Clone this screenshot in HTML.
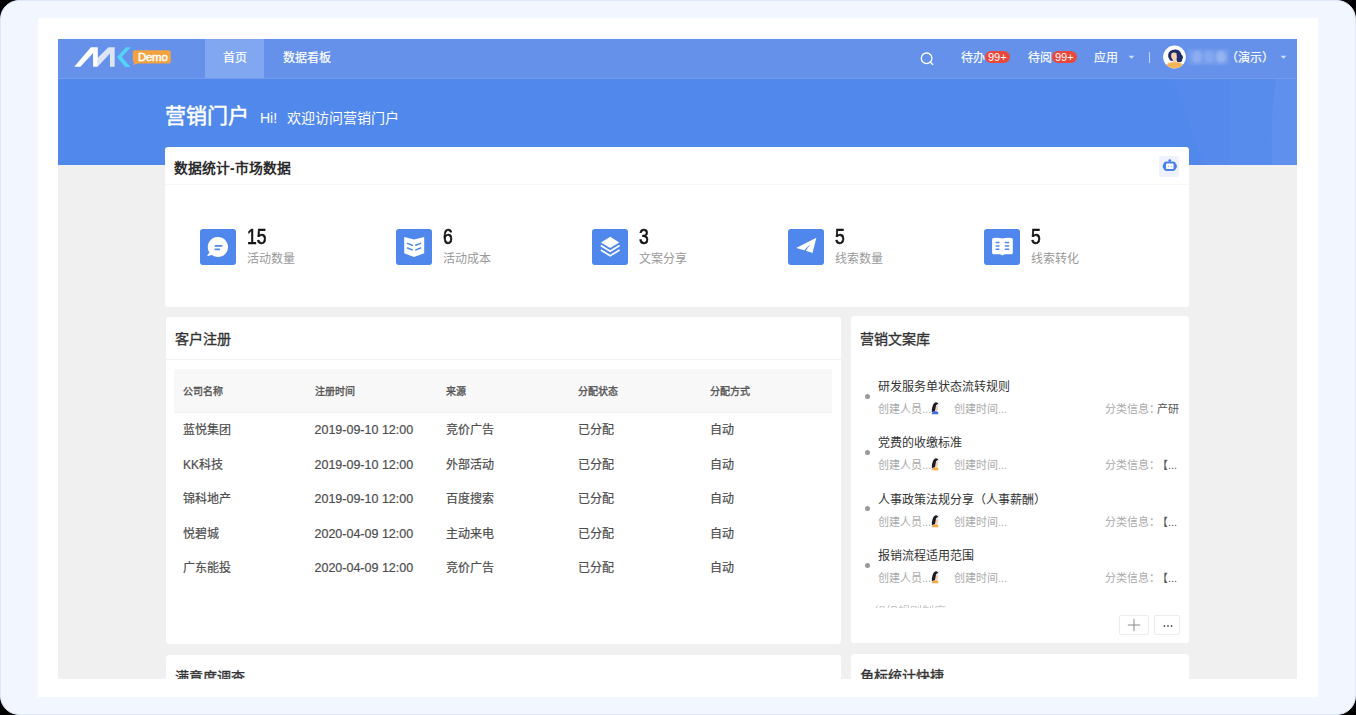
<!DOCTYPE html>
<html lang="zh-CN"><head><meta charset="utf-8">
<style>
*{box-sizing:border-box;margin:0;padding:0}
html,body{width:1356px;height:715px;overflow:hidden;background:#000;font-family:"Liberation Sans",sans-serif}
.outer{position:absolute;left:0;top:0;width:1356px;height:715px;background:#f1f6ff;border-radius:19px;border:1px solid #dfe8fb}
.frame{position:absolute;left:38px;top:18px;width:1280px;height:679px;background:#fff}
.page{position:absolute;left:58px;top:39px;width:1239px;height:640px;background:#f0f0f0;overflow:hidden}
.nav{position:absolute;left:0;top:0;width:1239px;height:40px;background:#6591eb;border-bottom:1px solid #729bed}
.banner{position:absolute;left:0;top:40px;width:1239px;height:86px;background:#5188ec}
.tab{position:absolute;top:0;height:39px;line-height:39px;color:#fff;font-size:12px;-webkit-text-stroke:0.2px #fff}
.tab.active{background:#80a7ef}
.nr{position:absolute;top:0;height:39px;line-height:39px;color:#fff;font-size:12px;-webkit-text-stroke:0.15px #fff}
.badge{display:inline-block;background:#e9483d;color:#fff;border-radius:6px;font-size:11px;line-height:12px;height:12px;padding:0 3px;vertical-align:1.5px;-webkit-text-stroke:0}
.card{position:absolute;background:#fff;border-radius:3px}
.t{position:absolute;white-space:nowrap}
.md{-webkit-text-stroke:0.35px currentColor}
.li{position:absolute;left:0;width:338px;height:52px}
.dot{position:absolute;left:14px;top:16.5px;width:5px;height:5px;border-radius:50%;background:#999}
.lt{position:absolute;left:27px;top:1px;font-size:12px;color:#333;line-height:18px;white-space:nowrap}
.lm{position:absolute;top:25px;font-size:11px;color:#aaa;line-height:14px;white-space:nowrap}
.sav{position:absolute;left:80px;top:25px}
.btn{position:absolute;height:20px;border:1px solid #ececec;border-radius:2px;color:#999;text-align:center;line-height:18px;font-size:16px}
.th{position:absolute;left:0;top:66.5px;width:675px;height:16px;font-size:10px;font-weight:normal;color:#555;line-height:16px;-webkit-text-stroke:0.35px currentColor}
.th span,.td span{position:absolute;top:0;white-space:nowrap}
.td{position:absolute;left:0;width:675px;height:18px;font-size:12px;color:#4d4d4d;line-height:18px;-webkit-text-stroke:0.2px currentColor}
.dt{font-size:12.5px}
.ib{position:absolute;top:82px;width:36px;height:36px;background:#4f87ec;border-radius:3px}
.ib svg{display:block}
.num{position:absolute;top:76.5px;font-size:22.5px;font-weight:normal;-webkit-text-stroke:0.7px #111;color:#111;line-height:26px;white-space:nowrap;transform:scaleX(0.78);transform-origin:0 0}
.lab{position:absolute;top:103.5px;font-size:12px;color:#999;line-height:16px;white-space:nowrap}
</style></head><body>
<div class="outer"></div>
<div class="frame"></div>
<div class="page">
  <div class="nav">
    <div class="tab active" style="left:147px;width:59px;padding-left:18px">首页</div>
    <div class="tab" style="left:225px;">数据看板</div>
    <svg style="position:absolute;left:12px;top:3px" width="65" height="30" viewBox="0 0 1356 626" preserveAspectRatio="none">
      <polygon fill="#dde5f5" points="580,330 801,110 932,110 932,516 834,516 834,240 580,511"/>
      <polygon fill="#ffffff" points="88,516 217,516 482,232 482,516 580,516 580,110 436,110"/>
      <polygon fill="#53d4f6" points="1170,110 1270,110 1080,315 1260,520 1150,520 980,315"/>
    </svg>
    <svg style="position:absolute;left:74px;top:10px" width="40" height="17" viewBox="0 0 40 17">
      <path fill="#f3a23f" d="M3,1.2 H36.6 Q38.8,1.2 38.8,3.4 V12.3 Q38.8,14.5 36.6,14.5 H6 L0.8,16 L2.4,13.6 Q0.8,13 0.8,11.5 V3.4 Q0.8,1.2 3,1.2 Z"/>
    </svg>
    <div class="t" style="left:80px;top:12px;font-size:11.5px;line-height:13px;font-weight:normal;-webkit-text-stroke:0.45px #fff;color:#fff;letter-spacing:-0.3px">Demo</div>
    <svg style="position:absolute;left:862px;top:13px" width="15" height="14" viewBox="0 0 15 14">
      <circle cx="6.6" cy="6.3" r="5.3" fill="none" stroke="#fff" stroke-width="1.3"/>
      <path d="M10.4,10.2 L12.8,12.4" stroke="#fff" stroke-width="1.4" stroke-linecap="round"/>
    </svg>
    <div class="nr" style="left:903px">待办<span class="badge">99+</span></div>
    <div class="nr" style="left:970px">待阅<span class="badge">99+</span></div>
    <div class="nr" style="left:1036px">应用</div>
    <svg style="position:absolute;left:1070px;top:16px" width="7" height="5" viewBox="0 0 7 5"><path d="M0.7,0.8 H6.3 L3.5,3.8 Z" fill="#d3e0f9"/></svg>
    <div style="position:absolute;left:1091px;top:13px;width:1px;height:11px;background:#c5d5f6"></div>
    <svg style="position:absolute;left:1105px;top:6px" width="24" height="24" viewBox="0 0 24 24">
      <defs><clipPath id="av"><circle cx="11.5" cy="12" r="11.3"/></clipPath></defs>
      <circle cx="11.5" cy="12" r="11.4" fill="#fff"/>
      <g clip-path="url(#av)">
        <path fill="#1e2c6a" d="M12,4.5 Q16.5,4.3 17.8,8 Q18.2,9.6 19.7,11 Q20.6,12.8 19.2,14.2 Q19.6,16.5 17,17 Q15.5,17.6 14,16.8 L12.5,11 Q10,13 9.8,16 Q7.5,16.2 6.5,14.5 Q4.6,12 5.2,9.5 Q5.8,5.2 12,4.5 Z"/>
        <path fill="#f6d1b3" d="M8.6,8.2 Q11.5,6.8 13.6,8.6 L13.9,13 Q13,15.6 11,15.3 Q8.6,14.6 8.2,12 Q8,9.5 8.6,8.2 Z"/>
        <path fill="#f6d1b3" d="M9.8,14.2 L12.8,14.2 L13.2,17.6 L9.6,17.6 Z"/>
        <path fill="#f5b455" d="M3,24 L3.6,19.6 Q6.2,17 9.8,17.3 L13,17.3 Q17.2,17 19.8,19.6 L20.4,24 Z"/>
      </g>
    </svg>
    <div style="position:absolute;left:1130px;top:10px;width:41px;height:16px;background:rgba(255,255,255,0.1);filter:blur(0.8px)"></div>
    <div style="position:absolute;left:1134px;top:12px;width:10px;height:12px;border-radius:5px;background:rgba(255,255,255,0.18);filter:blur(1.8px)"></div>
    <div style="position:absolute;left:1146px;top:12px;width:10px;height:12px;border-radius:5px;background:rgba(255,255,255,0.12);filter:blur(1.8px)"></div>
    <div style="position:absolute;left:1158px;top:12px;width:10px;height:12px;border-radius:5px;background:rgba(255,255,255,0.24);filter:blur(1.8px)"></div>
    <div class="nr" style="left:1168px">（演示）</div>
    <svg style="position:absolute;left:1222px;top:16px" width="7" height="5" viewBox="0 0 7 5"><path d="M0.7,0.8 H6.3 L3.5,3.8 Z" fill="#d3e0f9"/></svg>
  </div>
  <div class="banner">
    <svg style="position:absolute;left:0;top:0" width="1239" height="86" viewBox="0 0 1239 86">
      <path d="M1116,0 L1239,0 L1239,86 L1146,86 Z" fill="rgba(255,255,255,0.025)"/>
      <path d="M1171,0 L1239,0 L1239,86 L1171,86 Z" fill="rgba(255,255,255,0.015)"/>
      <path d="M1218,0 L1239,0 L1239,86 L1214,86 Q1212,40 1218,0 Z" fill="rgba(255,255,255,0.05)"/>
    </svg>
    <div class="t" style="left:107px;top:20px;font-size:21px;color:#fff;-webkit-text-stroke:0.5px #fff">营销门户</div>
    <div class="t" style="left:202px;top:28.3px;font-size:14px;color:#fff">Hi!<span style="display:inline-block;width:10px"></span>欢迎访问营销门户</div>
  </div>
  <!-- card 1 -->
  <div class="card" style="left:107px;top:108px;width:1024px;height:160px">
    <div class="t" style="left:9px;top:9.5px;font-size:13.8px;font-weight:bold;color:#2b2b2b">数据统计-市场数据</div>
    <div style="position:absolute;left:0;top:37px;width:1024px;height:1px;background:#f8f8f8"></div>
    <div style="position:absolute;left:994px;top:9px;width:20px;height:21px;background:#eef2fc;border-radius:2px"></div>
    <svg style="position:absolute;left:997px;top:12px" width="16" height="13" viewBox="0 0 16 13">
      <circle cx="7.8" cy="1.6" r="1.4" fill="#4a80ec"/>
      <path fill="#4a80ec" d="M4.5,2.6 H11 Q13.6,2.6 14,5 Q14.9,5.6 14.9,7.3 Q14.9,9 14,9.6 Q13.6,12 11,12 H4.5 Q1.9,12 1.5,9.6 Q0.7,9 0.7,7.3 Q0.7,5.6 1.5,5 Q1.9,2.6 4.5,2.6 Z"/>
      <rect x="4.1" y="4.6" width="7.4" height="5.4" rx="0.6" fill="#fff"/>
      <rect x="5.9" y="6.6" width="0.9" height="1.6" fill="#8fb0f2"/><rect x="8.8" y="6.6" width="0.9" height="1.6" fill="#8fb0f2"/>
    </svg>
    <div class="ib" style="left:35px"><svg width="36" height="36" viewBox="0 0 36 36">
      <path fill="#fff" d="M18,8 A10,10 0 1 1 12,26 L8,27 Q6.8,27.2 7.6,26 L9.4,23.4 A10,10 0 0 1 18,8 Z"/>
      <rect x="14.5" y="16.1" width="8" height="1.7" rx="0.8" fill="#4f87ec"/>
      <rect x="14.5" y="19.6" width="5.5" height="1.7" rx="0.8" fill="#4f87ec"/>
    </svg></div>
    <div class="num" style="left:82px">15</div><div class="lab" style="left:82px">活动数量</div>
    <div class="ib" style="left:231px"><svg width="36" height="36" viewBox="0 0 36 36">
      <path fill="#fff" d="M8.2,8 L18,10.6 L28.2,8 L28.2,24.3 L18,28 L8.2,24.3 Z"/>
      <path d="M11.5,14.4 L16.3,16.3 M11.5,19 L16.3,20.9 M19.8,16.3 L24.6,14.4 M19.8,20.9 L24.6,19" stroke="#4f87ec" stroke-width="1.5" stroke-linecap="round"/>
    </svg></div>
    <div class="num" style="left:278px">6</div><div class="lab" style="left:278px">活动成本</div>
    <div class="ib" style="left:427px"><svg width="36" height="36" viewBox="0 0 36 36">
      <path fill="#fff" d="M18.2,7.8 L27.3,13.4 L18.2,19 L8.9,13.4 Z"/>
      <path fill="none" stroke="#fff" stroke-width="1.7" d="M8.8,16.6 L18.2,22.3 L27.6,16.6 M8.8,21.1 L18.2,26.8 L27.6,21.1"/>
    </svg></div>
    <div class="num" style="left:474px">3</div><div class="lab" style="left:474px">文案分享</div>
    <div class="ib" style="left:623px"><svg width="36" height="36" viewBox="0 0 36 36">
      <path fill="#fff" d="M8.1,19 L28.4,8.8 L24.5,23.9 L17.8,21.8 L23,14.2 L16.3,21.3 Z"/>
    </svg></div>
    <div class="num" style="left:670px">5</div><div class="lab" style="left:670px">线索数量</div>
    <div class="ib" style="left:819px"><svg width="36" height="36" viewBox="0 0 36 36">
      <path fill="#fff" d="M9.4,8.9 Q14,8.2 18.4,9.6 Q22.8,8.2 27.5,8.9 Q28.8,9.2 28.8,10.6 L28.8,23.8 Q28.8,25.3 27.3,25.3 L20.8,25.3 L18.4,26.4 L16,25.3 L9.6,25.3 Q8.1,25.3 8.1,23.8 L8.1,10.6 Q8.1,9.2 9.4,8.9 Z"/>
      <path d="M12.2,13.4 H14.9 M12.2,16.9 H14.9 M12.2,20.2 H14.9 M21.4,13.4 H24.6 M21.4,16.9 H24.6 M21.4,20.2 H24.6" stroke="#4f87ec" stroke-width="1.5" stroke-linecap="round"/>
    </svg></div>
    <div class="num" style="left:866px">5</div><div class="lab" style="left:866px">线索转化</div>
  </div>
  <!-- table card -->
  <div class="card" style="left:108px;top:278px;width:675px;height:327px">
    <div class="t md" style="left:9px;top:11px;font-size:14px;color:#333">客户注册</div>
    <div style="position:absolute;left:0;top:42px;width:675px;height:1px;background:#f0f0f0"></div>
    <div style="position:absolute;left:8px;top:52px;width:658px;height:44px;background:#f8f8f8;border-bottom:1px solid #f0f0f0"></div>
    <div class="th"><span style="left:17px">公司名称</span><span style="left:148.5px">注册时间</span><span style="left:280px">来源</span><span style="left:412px">分配状态</span><span style="left:543.5px">分配方式</span></div>
    <div class="td" style="top:104.0px"><span style="left:17px">蓝悦集团</span><span class="dt" style="left:148.5px">2019-09-10 12:00</span><span style="left:280px">竞价广告</span><span style="left:412px">已分配</span><span style="left:543.5px">自动</span></div>
    <div class="td" style="top:138.6px"><span style="left:17px">KK科技</span><span class="dt" style="left:148.5px">2019-09-10 12:00</span><span style="left:280px">外部活动</span><span style="left:412px">已分配</span><span style="left:543.5px">自动</span></div>
    <div class="td" style="top:173.2px"><span style="left:17px">锦科地产</span><span class="dt" style="left:148.5px">2019-09-10 12:00</span><span style="left:280px">百度搜索</span><span style="left:412px">已分配</span><span style="left:543.5px">自动</span></div>
    <div class="td" style="top:207.8px"><span style="left:17px">悦碧城</span><span class="dt" style="left:148.5px">2020-04-09 12:00</span><span style="left:280px">主动来电</span><span style="left:412px">已分配</span><span style="left:543.5px">自动</span></div>
    <div class="td" style="top:242.4px"><span style="left:17px">广东能投</span><span class="dt" style="left:148.5px">2020-04-09 12:00</span><span style="left:280px">竞价广告</span><span style="left:412px">已分配</span><span style="left:543.5px">自动</span></div>
  </div>
  <!-- right card -->
  <div class="card" style="left:793px;top:277px;width:338px;height:327px">
    <div class="t md" style="left:9px;top:11.5px;font-size:14px;color:#333">营销文案库</div>
    <div class="li" style="top:61.0px">
      <div class="dot"></div>
      <div class="lt">研发服务单状态流转规则</div>
      <div class="lm" style="left:27px">创建人员...</div>
      <svg class="sav" width="9" height="13" viewBox="0 0 9 13"><path fill="#f4d2b6" d="M3.6,3 Q6.6,2.6 7,4.6 L6.9,8 Q5.8,9.6 4.2,9 Q3.3,7 3.6,3 Z"/><path fill="#1a1a2a" d="M4.7,0.3 Q7,0.2 7.4,2 Q5.6,2.2 5,3.4 Q4.5,6.5 3.8,9.6 L0.8,10 Q0.6,7 1.6,4 Q2.4,0.8 4.7,0.3 Z"/><path fill="#3d6fe0" d="M0.6,12.2 Q0.8,9.6 3.5,9.3 L6,9.3 Q7.4,9.8 7.4,12.2 Z"/></svg>
      <div class="lm" style="left:103px">创建时间...</div>
      <div class="lm" style="left:254px">分类信息：</div>
      <div class="lm" style="left:306px;color:#555">产研</div>
    </div>
    <div class="li" style="top:117.4px">
      <div class="dot"></div>
      <div class="lt">党费的收缴标准</div>
      <div class="lm" style="left:27px">创建人员...</div>
      <svg class="sav" width="9" height="13" viewBox="0 0 9 13"><path fill="#f4d2b6" d="M3.6,3 Q6.6,2.6 7,4.6 L6.9,8 Q5.8,9.6 4.2,9 Q3.3,7 3.6,3 Z"/><path fill="#1a1a2a" d="M4.7,0.3 Q7,0.2 7.4,2 Q5.6,2.2 5,3.4 Q4.5,6.5 3.8,9.6 L0.8,10 Q0.6,7 1.6,4 Q2.4,0.8 4.7,0.3 Z"/><path fill="#f3aa4c" d="M0.6,12.2 Q0.8,9.6 3.5,9.3 L6,9.3 Q7.4,9.8 7.4,12.2 Z"/></svg>
      <div class="lm" style="left:103px">创建时间...</div>
      <div class="lm" style="left:254px">分类信息：</div>
      <div class="lm" style="left:306px;color:#555">【...</div>
    </div>
    <div class="li" style="top:173.8px">
      <div class="dot"></div>
      <div class="lt">人事政策法规分享（人事薪酬）</div>
      <div class="lm" style="left:27px">创建人员...</div>
      <svg class="sav" width="9" height="13" viewBox="0 0 9 13"><path fill="#f4d2b6" d="M3.6,3 Q6.6,2.6 7,4.6 L6.9,8 Q5.8,9.6 4.2,9 Q3.3,7 3.6,3 Z"/><path fill="#1a1a2a" d="M4.7,0.3 Q7,0.2 7.4,2 Q5.6,2.2 5,3.4 Q4.5,6.5 3.8,9.6 L0.8,10 Q0.6,7 1.6,4 Q2.4,0.8 4.7,0.3 Z"/><path fill="#f3aa4c" d="M0.6,12.2 Q0.8,9.6 3.5,9.3 L6,9.3 Q7.4,9.8 7.4,12.2 Z"/></svg>
      <div class="lm" style="left:103px">创建时间...</div>
      <div class="lm" style="left:254px">分类信息：</div>
      <div class="lm" style="left:306px;color:#555">【...</div>
    </div>
    <div class="li" style="top:230.2px">
      <div class="dot"></div>
      <div class="lt">报销流程适用范围</div>
      <div class="lm" style="left:27px">创建人员...</div>
      <svg class="sav" width="9" height="13" viewBox="0 0 9 13"><path fill="#f4d2b6" d="M3.6,3 Q6.6,2.6 7,4.6 L6.9,8 Q5.8,9.6 4.2,9 Q3.3,7 3.6,3 Z"/><path fill="#1a1a2a" d="M4.7,0.3 Q7,0.2 7.4,2 Q5.6,2.2 5,3.4 Q4.5,6.5 3.8,9.6 L0.8,10 Q0.6,7 1.6,4 Q2.4,0.8 4.7,0.3 Z"/><path fill="#f3aa4c" d="M0.6,12.2 Q0.8,9.6 3.5,9.3 L6,9.3 Q7.4,9.8 7.4,12.2 Z"/></svg>
      <div class="lm" style="left:103px">创建时间...</div>
      <div class="lm" style="left:254px">分类信息：</div>
      <div class="lm" style="left:306px;color:#555">【...</div>
    </div>
    <div class="li" style="top:286px;height:6px;overflow:hidden;filter:blur(0.6px)"><div class="lt" style="top:1px;left:23px;color:#c4c4c4">组织规则制度</div></div>
    <div class="btn" style="left:268px;top:299px;width:30px"><svg style="position:absolute;left:7px;top:2px" width="14" height="14" viewBox="0 0 14 14"><path d="M7,0.8 V13.2 M0.8,7 H13.2" stroke="#8a8a8a" stroke-width="1"/></svg></div>
    <div class="btn" style="left:303px;top:299px;width:26px"><svg style="position:absolute;left:7px;top:8px" width="12" height="4" viewBox="0 0 12 4"><circle cx="2.4" cy="2" r="0.9" fill="#555"/><circle cx="6" cy="2" r="0.9" fill="#555"/><circle cx="9.6" cy="2" r="0.9" fill="#555"/></svg></div>
  </div>
  <div class="card" style="left:108px;top:615.5px;width:675px;height:60px">
    <div class="t md" style="left:9px;top:11px;font-size:14px;color:#333">满意度调查</div>
  </div>
  <div class="card" style="left:793px;top:615px;width:338px;height:60px">
    <div class="t md" style="left:9px;top:11px;font-size:14px;color:#333">角标统计快捷</div>
  </div>
</div>
</body></html>
